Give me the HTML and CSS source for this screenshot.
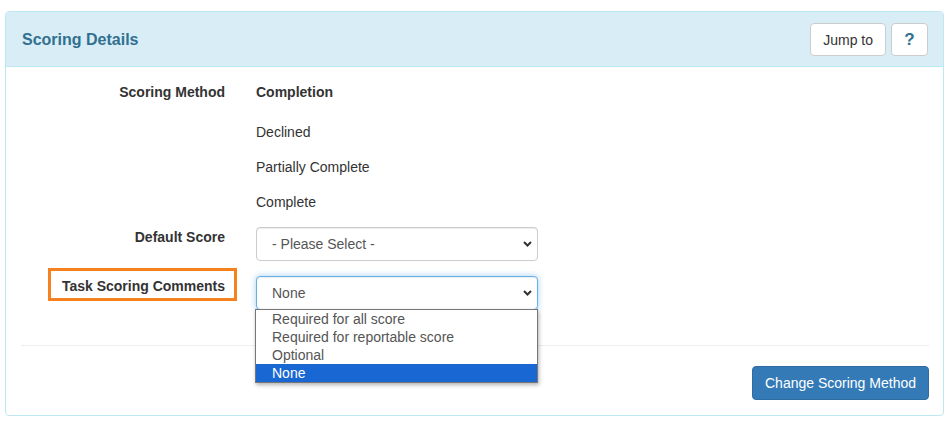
FILE: index.html
```html
<!DOCTYPE html>
<html>
<head>
<meta charset="utf-8">
<link rel="stylesheet" href="styles.css">
</head>
<body>
<div class="panel">
  <div class="panel-heading">
    <h3 class="panel-title">Scoring Details</h3>
    <div class="tools">
      <button class="btn btn-default">Jump to</button>
      <button class="btn btn-default btn-help">?</button>
    </div>
  </div>
  <div class="panel-body">
    <div class="form-grid">
      <div class="label">Scoring Method</div>
      <div class="value strong first">Completion</div>

      <div class="label"></div>
      <div class="value">Declined</div>

      <div class="label"></div>
      <div class="value">Partially Complete</div>

      <div class="label"></div>
      <div class="value">Complete</div>

      <div class="label">Default Score</div>
      <div class="select">
        <span>- Please Select -</span>
        <svg class="chev" width="9" height="6" viewBox="0 0 9 6"><path d="M1 1 L4.5 4.5 L8 1" fill="none" stroke="#333" stroke-width="2"/></svg>
      </div>

      <div class="label"><span class="highlight">Task Scoring Comments</span></div>
      <div class="select-wrap">
        <div class="select focus">
          <span>None</span>
          <svg class="chev" width="9" height="6" viewBox="0 0 9 6"><path d="M1 1 L4.5 4.5 L8 1" fill="none" stroke="#333" stroke-width="2"/></svg>
        </div>
        <ul class="dropdown">
          <li>Required for all score</li>
          <li>Required for reportable score</li>
          <li>Optional</li>
          <li class="selected">None</li>
        </ul>
      </div>
    </div>
    <hr class="divider">
    <div class="footer">
      <button class="btn btn-primary">Change Scoring Method</button>
    </div>
  </div>
</div>
</body>
</html>
```
FILE: styles.css
```css
* { box-sizing: border-box; }
html, body { margin: 0; padding: 0; background: #fff; }
body {
  font-family: "Liberation Sans", Arial, Helvetica, sans-serif;
  font-size: 14px;
  line-height: 20px;
  color: #333;
  padding: 11px 5px 0 5px;
}
.panel {
  border: 1px solid #bce8f1;
  border-radius: 4px;
  background: #fff;
  height: 405px;
}
.panel-heading {
  background: #d9edf7;
  border-bottom: 1px solid #bce8f1;
  border-radius: 3px 3px 0 0;
  height: 55px;
  padding: 0 15px 0 16px;
  display: flex;
  align-items: center;
  justify-content: space-between;
}
.panel-title {
  margin: 0;
  font-size: 16px;
  font-weight: bold;
  color: #31708f;
  line-height: 20px;
  padding-top: 1px;
}
.tools { display: flex; gap: 5px; }
.btn {
  font-family: inherit;
  font-size: 14px;
  line-height: 20px;
  border: 1px solid #ccc;
  border-radius: 4px;
  padding: 6px 12px;
  height: 33px;
  cursor: pointer;
}
.btn-default { background: #fff; color: #333; }
.btn-help {
  width: 37px;
  padding: 6px 0;
  font-weight: bold;
  font-size: 17px;
  color: #31708f;
}
.panel-body {
  padding: 15px 14px 0 15px;
}
.form-grid {
  display: grid;
  grid-template-columns: 204px 282px;
  column-gap: 31px;
  row-gap: 15px;
  align-items: start;
}
.label {
  text-align: right;
  font-weight: bold;
  line-height: 20px;
}
.value { line-height: 20px; }
.value.strong { font-weight: bold; }
.value.first { margin-bottom: 5px; }
.highlight { position: relative; }
.highlight::after {
  content: "";
  position: absolute;
  left: -14px;
  right: -12px;
  top: -10px;
  bottom: -7px;
  border: 3px solid #f5821f;
}
.select {
  height: 34px;
  border: 1px solid #ccc;
  border-radius: 4px;
  padding: 0 5px 0 15px;
  display: flex;
  align-items: center;
  justify-content: space-between;
  color: #555;
  background: #fff;
  box-shadow: inset 0 1px 1px rgba(0,0,0,.075);
}
.select.focus {
  border-color: #66afe9;
  box-shadow: inset 0 1px 1px rgba(0,0,0,.075), 0 0 6px rgba(102,175,233,.6);
}
.chev { display: block; }
.select-wrap { position: relative; }
.dropdown {
  position: absolute;
  left: -1px;
  top: 33px;
  width: 283px;
  margin: 0;
  padding: 0;
  list-style: none;
  background: #fff;
  border: 1px solid #767676;
  box-shadow: 1px 2px 4px rgba(0,0,0,.3);
  z-index: 2;
}
.dropdown li {
  line-height: 18px;
  height: 18px;
  padding-left: 16px;
  color: #555;
}
.dropdown li.selected {
  background: #1967d2;
  color: #fff;
}
.divider {
  border: 0;
  border-top: 1px solid #eee;
  margin: 35px 0 0 0;
}
.footer {
  display: flex;
  justify-content: flex-end;
  padding-top: 20px;
}
.btn-primary {
  background: #337ab7;
  border-color: #2e6da4;
  color: #fff;
  height: 34px;
  width: 177px;
  padding: 6px 0;
}
```
